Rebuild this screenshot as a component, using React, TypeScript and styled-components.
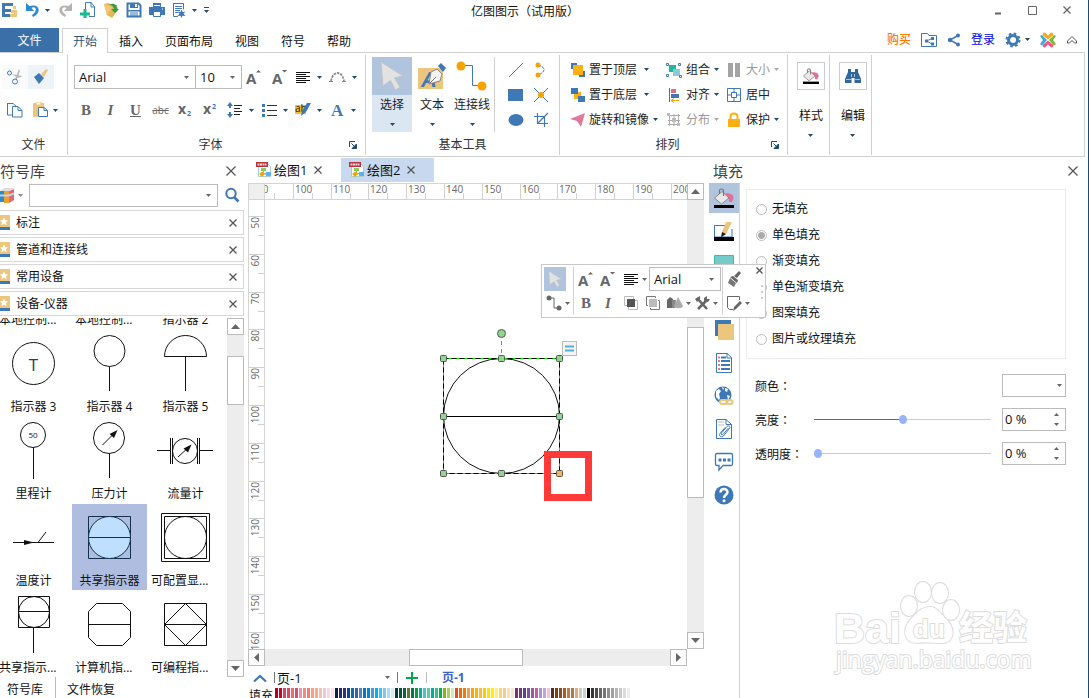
import React from "react";
import styled, { createGlobalStyle, css } from "styled-components";

const blue = "#3f79b5";
const navy = "#1f4a6d";
const gray = "#666";
const sand = "#edc67e";
const amber = "#f5a300";
const line = "#d0d0d0";

const Global = createGlobalStyle`
  *, *::before, *::after { box-sizing: border-box; }
  body { margin: 0; background: #fff; }
  body, button, input, select {
    font-family: "Open Sans", "Noto Sans CJK SC", sans-serif;
    font-size: 12px;
    line-height: 16px;
    color: #111;
  }
  button { border: 0; padding: 0; background: none; }
  svg { display: block; flex: none; }
`;

/* ---------- shell ---------- */
const Shell = styled.div`
  display: flex;
  flex-direction: column;
  height: 100vh;
  overflow: hidden;
  border-right: 1px solid ${navy};
`;
const TitleBar = styled.header`
  display: grid;
  grid-template-columns: 1fr auto 1fr;
  align-items: center;
  height: 24px;
  padding: 0 17px 4px 1px;
`;
const QuickBar = styled.div`
  display: flex;
  align-items: center;
  gap: 7px;
`;
const QuickGroup = styled.div`
  display: flex;
  align-items: center;
  gap: 4px;
`;
const AppTitle = styled.h1`
  margin: 4px 22px 0 0;
  font-size: 12px;
  line-height: 16px;
  font-weight: 400;
`;
const WindowButtons = styled.div`
  display: flex;
  justify-content: flex-end;
  gap: 25px;
`;
const IconButton = styled.button`
  display: flex;
  align-items: center;
  justify-content: center;
`;

/* ---------- tabs ---------- */
const TabBar = styled.nav`
  display: flex;
  align-items: flex-end;
  height: 28px;
  margin-right: 10px;
`;
const FileTab = styled.button`
  width: 59px;
  height: 24px;
  margin-right: 3px;
  padding-top: 2px;
  color: #fff;
  background: #3a70a8;
`;
const Tab = styled.button<{ $active?: boolean }>`
  position: relative;
  z-index: 1;
  height: 25px;
  padding: 2px 11px 0;
  margin-bottom: -1px;
  ${(p) =>
    p.$active &&
    css`
      padding: 1px 10px 0;
      color: #2b567e;
      background: #fff;
      border: solid ${line};
      border-width: 1px 1px 0;
    `}
`;
const Account = styled.div`
  display: flex;
  align-items: center;
  gap: 10px;
  height: 25px;
  margin-left: auto;
`;
const AccountLink = styled.a<{ $buy?: boolean }>`
  color: ${(p) => (p.$buy ? "#ff7800" : "#0000f0")};
  font-weight: ${(p) => (p.$buy ? 500 : 400)};
  text-decoration: none;
`;

/* ---------- ribbon ---------- */
const Ribbon = styled.section`
  display: flex;
  flex: none;
  height: 105px;
  margin-right: 3px;
  padding: 2px 0 1px;
  border: solid ${line};
  border-width: 1px 1px 1px 0;
`;
const Group = styled.div<{ $w: number }>`
  display: flex;
  flex-direction: column;
  width: ${(p) => p.$w}px;
  border-right: 1px solid ${line};
`;
const GroupRows = styled.div`
  display: flex;
  flex-direction: column;
  gap: 9px;
  padding: 10px 2px 0 6px;
`;
const GroupRow = styled.div`
  display: flex;
  align-items: center;
  height: 24px;
`;
const GroupLabel = styled.div`
  display: flex;
  align-items: center;
  justify-content: center;
  margin-top: auto;
  padding: 0 0 2px;
  color: #333;
  & > span { flex: 1; text-align: center; }
`;
const Launcher = styled(IconButton)`
  width: 8px;
  height: 16px;
  margin: 0 8px 0 -4px;
`;
const FileRows = styled(GroupRows)`
  padding: 10px 8px 0 2px;
`;
const FileButton = styled(IconButton)<{ $tint?: string; $menu?: boolean }>`
  gap: 4px;
  min-width: 26px;
  height: 24px;
  padding-left: ${(p) => (p.$menu ? 5 : 0)}px;
  background: ${(p) => p.$tint || "none"};
`;
const GlyphButton = styled(IconButton)<{ $w: number }>`
  width: ${(p) => p.$w}px;
  height: 24px;
`;
const MenuSet = styled.div`
  display: flex;
  margin-left: auto;
`;
const MenuButton = styled(IconButton)`
  justify-content: flex-start;
  gap: 6px;
  width: 34px;
  height: 24px;
`;
const Combo = styled.label<{ $w?: string; $h?: number }>`
  display: flex;
  align-items: center;
  flex: ${(p) => (p.$w ? "none" : "1")};
  width: ${(p) => p.$w || "auto"};
  height: ${(p) => p.$h || 24}px;
  padding-right: 6px;
  background: #fff;
  border: 1px solid #bbb;
  & + & { margin-left: -1px; }
  select, input {
    flex: 1;
    width: 100%;
    min-width: 0;
    height: 100%;
    padding: 0 0 0 4px;
    font-size: 13px;
    appearance: none;
    border: 0;
    outline: 0;
    background: none;
  }
`;

const ToolRow = styled.div`
  display: flex;
  padding: 2px 0 0 6px;
`;
const BigTool = styled.button<{ $active?: boolean }>`
  display: flex;
  flex-direction: column;
  align-items: center;
  width: 40px;
  height: 75px;
  color: #222;
  white-space: nowrap;
  background: ${(p) => (p.$active ? "#dae6f1" : "none")};
`;
const BigIcon = styled.span<{ $active?: boolean }>`
  display: flex;
  align-items: center;
  justify-content: center;
  width: 40px;
  height: 38px;
  margin-bottom: 2px;
  background: ${(p) => (p.$active ? "#b0c4de" : "none")};
`;
const BigArrow = styled.span`
  margin-top: 10px;
`;
const ShapeGrid = styled.div`
  display: grid;
  grid-template-columns: 25px 25px;
  grid-auto-rows: 25px;
  margin-left: 2px;
  padding-left: 8px;
  border-left: 1px solid ${line};
`;
const ArrangeGrid = styled.div`
  display: grid;
  grid-template-columns: 96px 60px 60px;
  grid-auto-rows: 25px;
  padding: 2px 0 0 10px;
`;
const ArrangeButton = styled.button<{ $dim?: boolean; $min?: number }>`
  display: flex;
  align-items: center;
  gap: 4px;
  white-space: nowrap;
  color: ${(p) => (p.$dim ? "#999" : "#222")};
  & > span { min-width: ${(p) => p.$min || 24}px; text-align: left; }
`;
const StyleTool = styled.button`
  display: flex;
  flex-direction: column;
  align-items: center;
  gap: 18px;
  padding: 7px 0 0 5px;
  width: 100%;
`;
const Framed = styled.span`
  display: flex;
  align-items: center;
  justify-content: center;
  width: 28px;
  height: 28px;
  border: 1px solid #ccc;
`;
const StyleText = styled.span`
  display: flex;
  flex-direction: column;
  align-items: center;
  gap: 10px;
`;

/* ---------- library panel ---------- */
const Body = styled.main`
  display: flex;
  flex: 1;
  min-height: 0;
`;
const Library = styled.aside`
  display: flex;
  flex-direction: column;
  flex: none;
  width: 248px;
  padding-right: 4px;
`;
const PanelHead = styled.div`
  display: flex;
  align-items: center;
  justify-content: space-between;
  flex: none;
  height: 26px;
  padding: 2px 8px 0 0;
`;
const PanelTitle = styled.h2`
  margin: 0;
  font-size: 15px;
  line-height: 20px;
  font-weight: 400;
  color: #444;
`;
const SearchRow = styled.div`
  display: flex;
  align-items: center;
  flex: none;
  gap: 6px;
  height: 24px;
  padding-right: 4px;
  margin-bottom: 3px;
`;
const Category = styled.div`
  display: flex;
  align-items: center;
  flex: none;
  height: 25px;
  margin-bottom: 2px;
  padding-right: 6px;
  border: solid #d8d8d8;
  border-width: 1px 1px 1px 0;
  & > span { flex: 1; margin-left: 6px; }
`;
const Shelf = styled.div`
  display: flex;
  flex: 1;
  min-height: 0;
`;
const SymbolView = styled.div`
  display: flex;
  flex: 1;
  flex-direction: column;
  justify-content: flex-end;
  overflow: hidden;
`;
const SymbolGrid = styled.div`
  display: grid;
  grid-template-columns: repeat(3, 75px);
  grid-auto-rows: 86px;
  gap: 1px;
  margin-left: -4px;
`;
const SymbolCell = styled.button<{ $selected?: boolean; $cut?: boolean }>`
  display: flex;
  flex-direction: column;
  justify-content: flex-end;
  align-items: ${(p) => (p.$cut ? "flex-start" : "center")};
  white-space: nowrap;
  background: ${(p) => (p.$selected ? "#aebde0" : "none")};
  & > span { height: 20px; padding: 3px 0 0 ${(p) => (p.$cut ? 3 : 0)}px; }
`;
const BottomTabs = styled.div`
  display: flex;
  flex: none;
  height: 21px;
`;
const BottomTab = styled.button<{ $first?: boolean }>`
  padding: 4px 12px 0 ${(p) => (p.$first ? 7 : 11)}px;
  border-right: ${(p) => (p.$first ? "1px solid #bbb" : "0")};
`;

/* ---------- scroll bars ---------- */
const ScrollBar = styled.div<{ $row?: boolean }>`
  display: flex;
  flex: none;
  flex-direction: ${(p) => (p.$row ? "row" : "column")};
  ${(p) => (p.$row ? "height: 17px; margin-right: 17px;" : "width: 17px;")}
  background: #ededed;
`;
const ScrollEnd = styled(IconButton)`
  flex: none;
  width: 17px;
  height: 17px;
  background: #fff;
  border: 1px solid #bbb;
`;
const Track = styled.div<{ $grow: number }>`
  flex: ${(p) => p.$grow} 1 0;
`;
const Thumb = styled.div<{ $grow: number }>`
  flex: ${(p) => p.$grow} 1 0;
  background: #fff;
  border: 1px solid #bbb;
`;

/* ---------- drawing area ---------- */
const Centre = styled.section`
  display: flex;
  flex: 1;
  flex-direction: column;
  min-width: 0;
`;
const DocTabs = styled.div`
  display: flex;
  flex: none;
  height: 26px;
  padding-top: 1px;
`;
const DocTab = styled.div<{ $active?: boolean }>`
  display: flex;
  align-items: center;
  gap: 2px;
  width: 93px;
  height: 24px;
  padding-left: 8px;
  font-size: 13px;
  background: ${(p) => (p.$active ? "#c8d8ef" : "none")};
  & > button { margin-left: 5px; }
`;
const Sheet = styled.div`
  display: grid;
  flex: 1;
  grid-template-columns: 17px minmax(0, 1fr) 17px;
  grid-template-rows: 17px minmax(0, 1fr);
  min-height: 0;
`;
const RulerCorner = styled.div`
  background: #efefef;
  border: 1px solid #d4d4d4;
`;
const RulerTop = styled.div`
  overflow: hidden;
  border: solid #d4d4d4;
  border-width: 1px 0;
`;
const RulerSide = styled.div`
  overflow: hidden;
  border: solid #d4d4d4;
  border-width: 0 1px;
`;
const SideScroll = styled.div`
  display: flex;
  grid-column: 3;
  grid-row: 1 / 3;
`;
const Canvas = styled.div`
  position: relative;
  z-index: 2;
  min-width: 0;
`;
const Placed = styled.div<{ $x: number; $y: number }>`
  position: absolute;
  left: ${(p) => p.$x}px;
  top: ${(p) => p.$y}px;
`;
const Marker = styled(Placed)`
  width: 48px;
  height: 50px;
  border: 7px solid #ff3838;
`;
const FloatBar = styled(Placed)`
  display: flex;
  gap: 1px;
  width: 225px;
  height: 54px;
  padding: 2px;
  background: #fff;
  border: 1px solid #c8c8c8;
`;
const FloatCol = styled.div<{ $w: number }>`
  display: flex;
  flex-direction: column;
  flex: none;
  width: ${(p) => p.$w}px;
  & + & { border-left: 1px solid ${line}; padding-left: 2px; }
`;
const FloatRow = styled.div`
  display: flex;
  align-items: center;
  height: 24px;
`;
const FloatButton = styled(IconButton)<{ $w: number; $active?: boolean }>`
  width: ${(p) => p.$w}px;
  height: 24px;
  gap: 3px;
  background: ${(p) => (p.$active ? "#b0c4de" : "none")};
`;
const FloatEnd = styled.div`
  display: flex;
  flex-direction: column;
  align-items: flex-end;
  gap: 11px;
  margin-left: auto;
`;
const PageBar = styled.div`
  display: flex;
  align-items: center;
  flex: none;
  height: 22px;
  padding: 1px 0 0 5px;
`;
const PageSelect = styled.label`
  display: flex;
  align-items: center;
  width: 124px;
  height: 11px;
  margin-left: 7px;
  padding-right: 7px;
  border: solid #777;
  border-width: 0 1px;
  select {
    flex: 1;
    padding: 0 0 0 2px;
    font-size: 13px;
    appearance: none;
    border: 0;
    background: none;
  }
`;
const AddPage = styled(IconButton)`
  width: 29px;
  height: 11px;
  border-right: 1px solid #bbb;
`;
const PageTab = styled.button`
  margin-left: 15px;
  color: #3a62c8;
  font-weight: 700;
`;
const Palette = styled.div`
  display: flex;
  flex: none;
  gap: 1px;
  height: 10px;
  padding-left: 1px;
  overflow: hidden;
  & > span { width: 25px; }
`;
const Swatch = styled.button<{ $c: string }>`
  width: 3px;
  background: ${(p) => p.$c};
`;

/* ---------- fill panel ---------- */
const FillPanel = styled.aside`
  display: flex;
  flex-direction: column;
  flex: none;
  width: 384px;
  padding-left: 5px;
`;
const FillHead = styled(PanelHead)`
  padding: 2px 10px 0 4px;
`;
const FillBody = styled.div`
  display: flex;
  flex: 1;
  min-height: 0;
`;
const IconStrip = styled.div`
  display: flex;
  flex-direction: column;
  flex: none;
  gap: 3px;
  width: 31px;
  border-right: 1px solid ${line};
`;
const StripButton = styled(IconButton)<{ $active?: boolean }>`
  height: 30px;
  background: ${(p) => (p.$active ? "#b0c4de" : "none")};
`;
const FillForm = styled.form`
  position: relative;
  flex: 1;
  padding: 6px 22px 0 6px;
`;
const Choices = styled.fieldset`
  display: flex;
  flex-direction: column;
  height: 170px;
  margin: 0 0 9px;
  padding: 6px 9px;
  border: 1px solid #ececec;
`;
const Choice = styled.label`
  display: flex;
  align-items: center;
  gap: 5px;
  height: 26px;
  input {
    appearance: none;
    width: 11px;
    height: 11px;
    margin: 0;
    border: 1px solid #bbb;
    border-radius: 50%;
  }
  input:checked { background: radial-gradient(#aaa 0 3px, #fff 4px); }
`;
const Field = styled.div`
  display: grid;
  grid-template-columns: 59px 1fr 64px;
  align-items: center;
  height: 34px;
  padding-left: 9px;
`;
const FieldLabel = styled.label`
  padding-top: 2px;
`;
const Colon = styled.span`
  font-family: "Noto Sans CJK TC", sans-serif;
`;
const Slider = styled.input<{ $v: number }>`
  appearance: none;
  width: auto;
  min-width: 0;
  height: 12px;
  margin: 0 11px 0 0;
  background: linear-gradient(90deg, #666 ${(p) => p.$v}%, #ccc ${(p) => p.$v}%) center / 100% 1px no-repeat;
  &::-webkit-slider-thumb {
    appearance: none;
    width: 8px;
    height: 9px;
    border-radius: 50%;
    background: #97b3ff;
  }
`;
const FieldBox = styled(Combo)`
  grid-column: 3;
  height: 23px;
  padding-right: 6px;
  input { padding-left: 2px; }
`;
const SelectBox = styled(FieldBox)`
  padding-right: 3px;
`;
const Spin = styled.span`
  display: flex;
  flex-direction: column;
  gap: 7px;
`;
const Watermark = styled.div`
  position: absolute;
  right: 53px;
  bottom: 20px;
`;

/* ---------- icons ---------- */
type IcProps = { w?: number; h?: number; children: React.ReactNode };
const Ic = ({ w = 16, h = 16, children }: IcProps) => (
  <svg width={w} height={h} viewBox={`0 0 ${w} ${h}`} fill="none" aria-hidden="true">
    {children}
  </svg>
);
const Down = ({ c = navy }: { c?: string }) => (
  <Ic w={5} h={3}><path d="M0 0h5L2.5 3z" fill={c} /></Ic>
);
const Up = ({ c = gray }: { c?: string }) => (
  <Ic w={5} h={3}><path d="M0 3h5L2.5 0z" fill={c} /></Ic>
);
const Cross = ({ s = 8, c = "#555" }: { s?: number; c?: string }) => (
  <Ic w={s} h={s}><path d={`M.5 .5L${s - 0.5} ${s - 0.5}M${s - 0.5} .5L.5 ${s - 0.5}`} stroke={c} strokeWidth="1.3" /></Ic>
);
const GrowA = ({ down = false }: { down?: boolean }) => (
  <Ic w={18} h={16}>
    <text x="0" y="15" fontSize="15" fontWeight="700" fill={gray}>A</text>
    <path d={down ? "M10 1h5L12.500 3.500z" : "M10 3.500h5L12.500 1z"} fill={gray} />
  </Ic>
);
const AlignLines = () => (
  <Ic w={16} h={14}><path d="M1 2.500h14M1 4.500h10M1 6.500h14M1 8.500h10M1 10.500h14M1 12.500h10" stroke="#111" /></Ic>
);
const FillBucket = ({ s = 20 }: { s?: number }) => (
  <svg width={s} height={s} viewBox="0 0 20 20" fill="none" aria-hidden="true">
    <path d="M11 5.500c4-.8 8 .7 8.500 3.500.2 2-1 4-2 5-.8.500-3-.3-2.800-1.200.5-1.500.5-3-1.200-3.500z" fill="#e0709a" />
    <path d="M8 3.500l7 6.500-7.500 6L.500 10z" fill="#e8e8e8" stroke="#888" />
    <path d="M5.500 6V2.500C5.500.500 9.500.500 9.500 2.500V8" stroke="#777" strokeWidth="1.200" />
    <path d="M0 17h20v3H0z" fill="#000" />
  </svg>
);
const Letter = styled.span<{ $italic?: boolean; $under?: boolean }>`
  font: ${(p) => (p.$italic ? "italic" : "normal")} 700 15px/16px "Liberation Serif", serif;
  color: ${gray};
  text-decoration: ${(p) => (p.$under ? "underline" : "none")};
`;
const Struck = styled.span`
  font-size: 10px;
  color: #666;
  text-decoration: line-through;
`;
const Scripted = ({ sup = false }: { sup?: boolean }) => (
  <Ic w={15} h={14}>
    <text x="0" y="11" fontSize="14" fontWeight="700" fill={gray}>x</text>
    <text x="9" y={sup ? 6 : 13} fontSize="7" fontWeight="700" fill={blue}>2</text>
  </Ic>
);
const DocIcon = () => (
  <Ic>
    <path d="M2.500 1.500h9l3 3v10h-12z" fill="#fff" stroke="#a8ccd0" />
    <path d="M0 0h12v5H0z" fill="#b8323c" />
    <path d="M1.500 2.500h9" stroke="#f4d8d8" strokeWidth="2" strokeDasharray="2 .5" />
    <path d="M5 6h5v3H8v2h3v1.500H4V11h3V9H5z" fill="#8cc860" />
    <path d="M10 10h5v4h-5z" fill="#5ab0f0" /><path d="M6 9.500L8.800 12 6 15 3.200 12z" fill={amber} />
  </Ic>
);
const LauncherIcon = () => (
  <Ic w={8} h={8}><path d="M.500 6V.500H6" stroke={navy} /><path d="M2.500 2.500L6 6M7.500 3v4.500H3z" stroke={navy} fill={navy} /></Ic>
);
const StarIcon = () => (
  <Ic w={10} h={16}><path d="M0 0h10v12H0z" fill={sand} /><path d="M0 12h10v3H0z" fill={blue} /><path d="M4 2.500l1.200 2.600 2.800.3-2 2 .6 2.800L4 8.800l-2.600 1.400.6-2.800-2-2 2.800-.3z" fill="#fff" /></Ic>
);
const ShareNodes = () => (
  <Ic w={14} h={14}><path d="M11 2.500L3 7l8 4.500" stroke={blue} strokeWidth="1.500" /><g fill={blue}><circle cx="3" cy="7" r="2.200" /><circle cx="11" cy="2.500" r="2" /><circle cx="11" cy="11.500" r="2" /></g></Ic>
);
const Dots = () => (
  <Ic w={2} h={14}><path d="M0 0h2v2H0zM0 6h2v2H0zM0 12h2v2H0z" fill="#ccc" /></Ic>
);
const Pointer = ({ s = 28 }: { s?: number }) => (
  <svg width={s} height={s} viewBox="0 0 28 28" aria-hidden="true"><path d="M3 0l22 14-8.500 2L22 25l-4.500 3-5-9.500L5 24z" fill="#e2e2e2" stroke="#c4c4c4" /></svg>
);

/* ---------- library symbols ---------- */
const sym = { stroke: "#111", fill: "none" };
const symbols: { name: string; cut?: boolean; selected?: boolean; art?: React.ReactNode }[] = [
  { name: "本地控制...", cut: true },
  { name: "本地控制...", cut: true },
  { name: "指示器 2" },
  { name: "指示器 3", art: <><circle cx="37.500" cy="33.500" r="21" {...sym} /><text x="37.500" y="41" textAnchor="middle" fontSize="17" fill="#2b3f55">T</text></> },
  { name: "指示器 4", art: <><circle cx="37.500" cy="21" r="15.500" {...sym} /><path d="M37.500 36.500V61" {...sym} /></> },
  { name: "指示器 5", art: <path d="M16.500 26.500a21 21 0 0 1 42 0zM37.500 26.500V61" {...sym} /> },
  { name: "里程计", art: <><circle cx="37" cy="18" r="12.500" {...sym} /><path d="M37.500 30.500V62" {...sym} /><text x="37" y="21" textAnchor="middle" fontSize="8" fill="#111">50</text></> },
  { name: "压力计", art: <><circle cx="37" cy="21" r="15.500" {...sym} /><path d="M37.500 36.500V61M30.500 28L43 15.500" {...sym} /><path d="M45.500 13l-3.500 8-4.500-4z" fill="#111" /></> },
  { name: "流量计", art: <><circle cx="37" cy="34" r="12.500" {...sym} /><path d="M22.500 21v26M24.500 21v26M49.500 21v26M51.500 21v26M9 33.500h13M52 33.500h13M30 40l11-10" {...sym} /><path d="M43.500 27.500l-3.500 8-4.500-4z" fill="#111" /></> },
  { name: "温度计", art: <><path d="M17 38.500h41M42 38.500L50 28" {...sym} /><path d="M28 36l10 2.500-10 2.500z" fill="#111" /></> },
  { name: "共享指示器", selected: true, art: <><path d="M16.500 12.500h42v42h-42z" stroke="#14304e" fill="none" /><circle cx="37.500" cy="33.500" r="21" stroke="#14304e" fill="#bfdfff" /><path d="M16.500 33.500h42" stroke="#14304e" /></> },
  { name: "可配置显...", cut: true, art: <><path d="M13.500 9.500h48v48h-48zM16.500 12.500h42v42h-42z" {...sym} /><circle cx="37.500" cy="33.500" r="21" {...sym} /></> },
  { name: "共享指示...", cut: true, art: <><path d="M22.500 5.500h31v31h-31zM22.500 20.500h31M37.500 36.500V62" {...sym} /><circle cx="38" cy="21" r="15.500" {...sym} /></> },
  { name: "计算机指...", cut: true, art: <path d="M24.500 12.500h26l8 8v26l-8 8h-26l-8-8v-26zM16.500 33.500h42" {...sym} /> },
  { name: "可编程指...", cut: true, art: <path d="M16.500 12.500h42v42h-42zM37.500 12.500l21 21-21 21-21-21zM16.500 33.500h42" {...sym} /> },
];

const palette =
  "b5001f d7001f cc4a6e e2455f ec6a72 d84b78 e896b0 f08c86 ec8074 ff9e7a f8a88c f4bfb4 ecc8de ffd4e0 ffe0e6 " +
  "0c1f4c 1f2e72 3c2c78 004a96 0c6cae 3c62a8 5480c0 0078c8 0088d8 4c9ad0 00b0f0 34c4f8 84c4e8 a4dcf0 d4ecf4 " +
  "003c30 005a38 106048 5c7c2c 007a48 0c9c40 00b09a 54c0c0 5ccab4 00b090 44b88c 00b848 84b80c a8d058 d0e8c8 " +
  "e04c1c f06a00 f07c00 f09c54 f4a800 fcb400 fcbc3c ffcc00 ffe400 fff000 fff070 f4d47c f4cc8c fce0ac fce8d0 " +
  "783080 6c3c7c 643c90 7c54a0 985ca0 c060a0 ac90d0 c4a4d4 f0c4dc 5c2c1c 843c14 8c4c24 a85c24 c07c40 a87850 " +
  "dcb07c d4c8b8 c8d4cc 000000 383838 505050 686868 787878 909090 a0a0a0 b4b4b4 c8c8c8 dcdcdc ececec";

/* ---------- rulers ---------- */
const majors = (from: number, start: number, count: number) =>
  Array.from({ length: count }, (_, i) => ({
    value: from + i * 10,
    at: start + Math.round((i * 189) / 5),
  }));

const TopRuler = () => (
  <svg width="422" height="15" viewBox="0 0 422 15">
    {majors(90, -10, 12).map((m) => (
      <g key={m.value}>
        <path d={`M${m.at + 0.5} 0v15M${m.at + 19.5} 9v6`} stroke="#d0d0d0" />
        <text x={m.at + 2} y="9" fontSize="10" fill="#6a6a6a">{m.value}</text>
      </g>
    ))}
  </svg>
);
const LeftRuler = () => (
  <svg width="15" height="449" viewBox="0 0 15 449">
    {majors(50, 16, 12).map((m) => (
      <g key={m.value}>
        <path d={`M0 ${m.at + 0.5}h15M9 ${m.at + 19.5}h6`} stroke="#d0d0d0" />
        <text
          transform={`translate(10 ${m.at + 1}) rotate(-90)`}
          textAnchor="end"
          fontSize="10"
          fill="#6a6a6a"
        >
          {m.value}
        </text>
      </g>
    ))}
  </svg>
);

/* ---------- selected shape on the sheet ---------- */
const Handle = ({ x, y, c = "#8fd68f" }: { x: number; y: number; c?: string }) => (
  <rect x={x - 3} y={y - 3} width="6" height="6" rx="1" fill={c} stroke="#555" />
);
const SelectedShape = () => (
  <svg width="144" height="152" viewBox="438 326 144 152" fill="none">
    <ellipse cx="501.500" cy="416" rx="58" ry="57.500" stroke="#111" />
    <path d="M443.500 416.500h116" stroke="#000" />
    <rect x="443.500" y="358.500" width="116" height="115" stroke="#00e800" />
    <rect x="443.500" y="358.500" width="116" height="115" stroke="#000" strokeDasharray="5 3" />
    <path d="M501.500 341v17" stroke="#00e800" strokeDasharray="4 4" />
    <circle cx="501.500" cy="333.500" r="4" fill="#8fd68f" stroke="#555" />
    {[443.5, 501.5, 559.5].map((x) => (
      <React.Fragment key={x}>
        <Handle x={x} y={358.500} />
        <Handle x={x} y={473.500} c={x > 550 ? "#ffb347" : undefined} />
      </React.Fragment>
    ))}
    <Handle x={443.500} y={416.500} />
    <Handle x={559.500} y={416.500} />
    <rect x="562.500" y="341.500" width="14" height="14" fill="#f4f4f4" stroke="#bbb" />
    <path d="M565 346.500h9M565 350.500h9" stroke="#4db4d8" strokeWidth="2" />
  </svg>
);

const stripIcons: React.ReactNode[] = [
  <FillBucket />,
  <Ic w={20} h={20}><path d="M.500 4.500H14M.500 4v12H18V8" stroke={blue} /><path d="M12 1h6l-6 12-5 3 1-5z" fill={sand} /><path d="M8 11l4 2-5 3.500z" fill="#222" /><path d="M0 16h20v4H0z" fill="#000" /></Ic>,
  <Ic w={20} h={20}><path d="M.500 1.500h19v17H.500z" fill="#74ccc8" stroke="#4cb4ac" /></Ic>,
  <Ic w={20} h={20}><path d="M2 2h16v16H2z" fill="#9bb8d8" /></Ic>,
  <Ic w={20} h={20}><path d="M1 0h16v16H1z" fill={blue} /><path d="M4 4h16v16H4z" fill={sand} /></Ic>,
  <Ic w={20} h={20}><path d="M2.500.500H13l4.500 4V19.500h-15z" stroke={blue} /><path d="M13 0v5h5" stroke={blue} /><path d="M7 4.500h5M7 8h9M7 12h9M7 16h9" stroke={blue} strokeWidth="2" /><path d="M4 4.500h2M4 8h2M4 12h2M4 16h2" stroke="#e87888" strokeWidth="2" /></Ic>,
  <Ic w={20} h={20}><circle cx="9" cy="9" r="8.500" fill={blue} /><path d="M2 5l3-2 2 2-2 3 1 4-1 2-3-3zM8 1l2 1-1 2zM11 2l3 1-1 3-2-1zM13 9l3 1-2 4z" fill="#fff" /><rect x="6" y="14" width="7" height="4" rx="2" fill="#fff" stroke={sand} strokeWidth="2" /><rect x="12.500" y="14" width="6" height="4" rx="2" stroke={sand} strokeWidth="2" /></Ic>,
  <Ic w={20} h={20}><path d="M2.500.500H12l5.500 5V19.500h-15zM12 .500v5h5.500" stroke={blue} /><path d="M4 3h6M4 6h6" stroke="#bbb" /><path d="M14.500 9L9 15.500c-1 1-2.500 0-1.500-1.500L13 7.500c1.500-1.500 4 0 2.500 2L9.500 17c-2 2-5 0-3.500-2.500l5-6" stroke={blue} /></Ic>,
  <Ic w={20} h={20}><path d="M3 1.500h14c1 0 1.500.5 1.500 1.500v9c0 1-.5 1.500-1.500 1.500H9L5 18v-4.500H3c-1 0-1.500-.5-1.500-1.500V3c0-1 .5-1.500 1.500-1.500z" stroke={blue} strokeWidth="1.300" /><path d="M4.500 6.500h3v3h-3zM9 6.500h3v3H9zM13.500 6.500h3v3h-3z" fill={blue} /></Ic>,
  <Ic w={20} h={20}><circle cx="10" cy="10" r="9.500" fill={blue} /><path d="M6.500 7.500c0-4.500 7-4.500 7-.5 0 3-3.500 2.500-3.500 6" stroke="#fff" strokeWidth="2.400" /><circle cx="10" cy="15.800" r="1.500" fill="#fff" /></Ic>,
];
const stripNames = ["填充", "线条", "主题", "阴影", "图层", "形状数据", "超链接", "附件", "注释", "帮助"];
const choices = ["无填充", "单色填充", "渐变填充", "单色渐变填充", "图案填充", "图片或纹理填充"];

export default function App() {
  return (
    <Shell>
      <Global />
      <TitleBar>
        <QuickBar>
          <QuickGroup>
            <Ic w={17}><path d="M1 1h11v3H4v3h6v3H4v2h5v3H1z" fill={blue} /><path d="M12 4h3v3h-3zM10 8h6v7H9v-3h4v-1h-3z" fill={sand} /></Ic>
          </QuickGroup>
          <QuickGroup>
            <IconButton aria-label="撤销"><Ic><path d="M1 1v8h8L6.500 6C11 3.500 13 9 7 13l1 2C17 11 15 1 4.500 4z" fill="#2a8ad4" /></Ic></IconButton>
            <Down />
          </QuickGroup>
          <IconButton aria-label="恢复"><Ic><path d="M15 1v8H7l2.500-3C5 3.500 3 9 9 13l-1 2C-1 11 1 1 11.500 4z" fill="#b4b4b4" /></Ic></IconButton>
          <IconButton aria-label="新建"><Ic><path d="M5.500 7V.500H11l3.500 4V14.500H9M11 0v5h4" stroke={blue} /><path d="M3.500 7h3v3.500H10v3H6.500V17h-3v-3.500H0v-3h3.500z" fill="#1cb890" /></Ic></IconButton>
          <IconButton aria-label="打开"><Ic><path d="M1 2l5-1 2 2h6l1 5-6 8-5-3z" fill="#e8b455" /><path d="M1 2l3 11 5-8z" fill="#f0c878" /><path d="M6 3c5-3 8 0 8 4h2l-4 4-4-4h3c0-2-2-4-5-4z" fill="#2ea043" /></Ic></IconButton>
          <IconButton aria-label="保存"><Ic><path d="M1.500 1.500h11l2 2v11h-13z" fill="#fff" stroke={blue} strokeWidth="2" /><path d="M4 1h8v5H4zM1 8h14v1.500H1z" fill={blue} /><path d="M9 2h2v3H9z" fill="#fff" /><path d="M4 11h8M4 13h8" stroke={blue} /></Ic></IconButton>
          <IconButton aria-label="打印"><Ic><path d="M4 1h8v4H4zM0 5h16v8H0z" fill={blue} /><path d="M4.500 9.500h7v5h-7z" fill="#fff" stroke={blue} /><path d="M5 3.500h6M13 7h1" stroke="#fff" /></Ic></IconButton>
          <QuickGroup>
            <IconButton aria-label="预览"><Ic><path d="M1.500 1.500h10v6M1.500 1v13.500H6" stroke={blue} /><path d="M3 4.500h7M3 6.500h7M3 8.500h5M3 10.500h3" stroke={blue} /><path d="M9.500 7.500l1 2.500 3-.5-2 2.300 2 2.200-3-.3-1 2.300-1-2.300-3 .3 2-2.200-2-2.300 3 .5z" fill={blue} /></Ic></IconButton>
            <Down />
          </QuickGroup>
          <Ic w={6} h={6}><path d="M0 .500h5" stroke={navy} /><path d="M0 3h5L2.500 6z" fill={navy} /></Ic>
        </QuickBar>
        <AppTitle>亿图图示（试用版）</AppTitle>
        <WindowButtons>
          <IconButton aria-label="最小化"><Ic w={10} h={9}><path d="M2 7.500h6" stroke={gray} strokeWidth="2" /></Ic></IconButton>
          <IconButton aria-label="最大化"><Ic w={10} h={9}><path d="M.500.500h8v8h-8z" stroke={gray} /></Ic></IconButton>
          <IconButton aria-label="关闭"><Cross s={8} c={gray} /></IconButton>
        </WindowButtons>
      </TitleBar>

      <TabBar>
        <FileTab>文件</FileTab>
        <Tab $active>开始</Tab>
        {["插入", "页面布局", "视图", "符号", "帮助"].map((t) => <Tab key={t}>{t}</Tab>)}
        <Account>
          <AccountLink $buy href="#buy">购买</AccountLink>
          <IconButton aria-label="共享文件夹"><Ic><path d="M.500 1.500h6l1.500 2h7.500v11H.500z" stroke={blue} /><path d="M11 6.500L5.500 9l5.500 3" stroke={blue} /><path d="M4 7.500h3v3H4zM10 5h3v3h-3zM10 10.500h3v3h-3z" fill={blue} /></Ic></IconButton>
          <IconButton aria-label="分享"><ShareNodes /></IconButton>
          <AccountLink href="#login">登录</AccountLink>
          <QuickGroup>
            <IconButton aria-label="设置"><Ic><circle cx="8" cy="8" r="6.500" stroke={blue} strokeWidth="2" strokeDasharray="2.600 2.500" /><circle cx="8" cy="8" r="4.500" stroke={blue} strokeWidth="3" /></Ic></IconButton>
            <Down />
          </QuickGroup>
          <IconButton aria-label="主页"><Ic><path d="M3 1l2-.5 3 3 3-3 2 .5.500 2L8 7.500 2.500 3z" fill="#f5a820" /><path d="M14 3l2 1-3 4 3 4-2 1.500L9 8z" fill="#7cb82c" /><path d="M3 15l2 .5 3-3 3 3 2-.5.500-2L8 8.500 2.500 13z" fill="#ec5c80" /><path d="M2 3L0 4l3 4-3 4 2 1.500L7 8z" fill="#38a8e0" /></Ic></IconButton>
          <IconButton aria-label="折叠功能区"><Ic w={12} h={10}><path d="M1.500 6L6 1.500 10.500 6v2H8.500L6 5.500 3.500 8h-2z" stroke="#555" /></Ic></IconButton>
        </Account>
      </TabBar>

      <Ribbon>
        <Group $w={68}>
          <FileRows>
            <GroupRow>
              <FileButton $tint="#f8fafc" aria-label="剪切"><Ic><circle cx="2.500" cy="4" r="2" stroke={blue} /><circle cx="8" cy="12.500" r="2.500" stroke={blue} /><path d="M4.500 5l11 2-4 2zM8 10L12 0l1 2-3 8z" fill="#b8b8b8" /></Ic></FileButton>
              <FileButton $tint="#eef3f8" aria-label="格式刷"><Ic><path d="M8 5l5-5 2 1-4 7z" fill={sand} /><path d="M6 4l5 5-5 6-5-7z" fill={blue} /></Ic></FileButton>
            </GroupRow>
            <GroupRow>
              <FileButton aria-label="复制"><Ic><path d="M.500 1.500H6L9 4M.500 1v12H5M5.500 4.500H11l4 4v6.500H5.500zM11 4.500v4h4" stroke={blue} /></Ic></FileButton>
              <FileButton $menu aria-label="粘贴"><Ic><path d="M0 1h11v5H5v9H0z" fill={sand} /><path d="M3 0h5v3H3z" fill="#fff" stroke={sand} /><path d="M5.500 5.500H11l3.500 3v6h-9zM11 5.500v3h3.500" fill="#fff" stroke={blue} /></Ic><Down /></FileButton>
            </GroupRow>
          </FileRows>
          <GroupLabel><span>文件</span></GroupLabel>
        </Group>

        <Group $w={298}>
          <GroupRows>
            <GroupRow>
              <Combo $w="122px"><select aria-label="字体"><option>Arial</option></select><Down c={gray} /></Combo>
              <Combo $w="47px"><select aria-label="字号"><option>10</option></select><Down c={gray} /></Combo>
              <GlyphButton $w={26} aria-label="增大字号"><GrowA /></GlyphButton>
              <GlyphButton $w={26} aria-label="减小字号"><GrowA down /></GlyphButton>
              <MenuSet>
                <MenuButton aria-label="对齐"><AlignLines /><Down /></MenuButton>
                <MenuButton aria-label="弧形文本"><Ic w={17} h={14}><path d="M2 11c1-6 4-8 6.500-8s5.500 2 6.500 8" stroke="#888" strokeWidth="1.800" strokeDasharray="2.500 1" /><path d="M0 11.500h4M13 11.500h4" stroke="#888" /></Ic><Down /></MenuButton>
              </MenuSet>
            </GroupRow>
            <GroupRow>
              <GlyphButton $w={24} aria-label="加粗"><Letter>B</Letter></GlyphButton>
              <GlyphButton $w={25} aria-label="斜体"><Letter $italic>I</Letter></GlyphButton>
              <GlyphButton $w={25} aria-label="下划线"><Letter $under>U</Letter></GlyphButton>
              <GlyphButton $w={25} aria-label="删除线"><Struck>abc</Struck></GlyphButton>
              <GlyphButton $w={25} aria-label="下标"><Scripted /></GlyphButton>
              <GlyphButton $w={25} aria-label="上标"><Scripted sup /></GlyphButton>
              <MenuSet>
                <MenuButton aria-label="行距"><Ic><path d="M3 0l3 4H4v2H2V4H0zM3 16l3-4H4v-2H2v2H0z" fill={blue} /><path d="M7 3.500h8M7 6.500h6M7 9.500h8M7 12.500h6" stroke="#222" /></Ic><Down /></MenuButton>
                <MenuButton aria-label="项目符号"><Ic><path d="M1 2h3v3H1zM1 7h3v3H1zM1 12h3v3H1z" fill={blue} /><path d="M6 3.500h10M6 8.500h10M6 13.500h10" stroke="#333" /></Ic><Down /></MenuButton>
                <MenuButton aria-label="突出显示"><Ic><path d="M0 3h11v9H0z" fill="#ffb829" /><text x="0" y="10" fontSize="10" fill="#222">ab</text><path d="M12 1h4l-5 9-5 4 1-5z" fill={blue} /></Ic><Down /></MenuButton>
                <MenuButton aria-label="字体颜色"><Ic><text x="2" y="14" fontSize="17" fontWeight="700" fontFamily="Liberation Serif" fill={blue}>A</text></Ic><Down /></MenuButton>
              </MenuSet>
            </GroupRow>
          </GroupRows>
          <GroupLabel><span>字体</span><Launcher aria-label="字体设置"><LauncherIcon /></Launcher></GroupLabel>
        </Group>

        <Group $w={194}>
          <ToolRow>
            <BigTool $active><BigIcon $active><Pointer /></BigIcon>选择<BigArrow><Down /></BigArrow></BigTool>
            <BigTool>
              <BigIcon><Ic w={30} h={30}><path d="M1 7h25v21H1z" fill={sand} /><text x="4" y="26" fontSize="22" fontWeight="700" fontStyle="italic" fontFamily="Liberation Sans" fill={blue}>A</text><path d="M20 8l5 5-2 7-11 3 2-12z" fill="#f4f4f4" stroke="#888" /><path d="M13 22l6-6" stroke="#777" /><path d="M21 5l3-3 5 5-3 4z" fill={blue} /></Ic></BigIcon>
              文本<BigArrow><Down /></BigArrow>
            </BigTool>
            <BigTool>
              <BigIcon><Ic w={32} h={30}><path d="M5 4.500h11.500v20H27" stroke={blue} /><circle cx="5" cy="5" r="4.500" fill={amber} /><circle cx="26" cy="25" r="4.500" fill={amber} /></Ic></BigIcon>
              连接线<BigArrow><Down /></BigArrow>
            </BigTool>
            <ShapeGrid>
              <IconButton aria-label="直线"><Ic><path d="M1 15L15 1" stroke={blue} /></Ic></IconButton>
              <IconButton aria-label="曲线"><Ic><path d="M5 3c8 2 8 7 0 10" stroke={blue} strokeDasharray="3 1" /><circle cx="5" cy="3" r="2.500" fill={amber} /><circle cx="5" cy="13" r="2.500" fill={amber} /></Ic></IconButton>
              <IconButton aria-label="矩形"><Ic><path d="M0 2h15v12H0z" fill={blue} /></Ic></IconButton>
              <IconButton aria-label="连接点"><Ic><path d="M1 1l14 14M15 1L1 15" stroke={blue} /><circle cx="8" cy="8" r="3" fill={amber} /></Ic></IconButton>
              <IconButton aria-label="椭圆"><Ic><ellipse cx="8" cy="8" rx="7.500" ry="6" fill={blue} /></Ic></IconButton>
              <IconButton aria-label="裁剪"><Ic><path d="M4.500 1v10.500H15M1 4.500h10.500V15M5 11L15 1" stroke={blue} strokeWidth="1.200" /></Ic></IconButton>
            </ShapeGrid>
          </ToolRow>
          <GroupLabel><span>基本工具</span></GroupLabel>
        </Group>

        <Group $w={228}>
          <ArrangeGrid>
            <ArrangeButton $min={51}><Ic w={15}><path d="M1 1h6v6H1zM9 9h6v6H9z" fill={blue} /><path d="M3 3h10v10H3z" fill="#ffb010" /></Ic><span>置于顶层</span><Down /></ArrangeButton>
            <ArrangeButton><Ic><path d="M3 3h7v7H3z" fill="#1cb8a0" /><path d="M7 7h7v7H7z" fill="#88ccd8" /><path d="M.500 1.500h2v2h-2zM12.500 1.500h2v2h-2zM.500 12.500h2v2h-2zM13.500 13.500h2v2h-2z" stroke={blue} /></Ic><span>组合</span><Down /></ArrangeButton>
            <ArrangeButton $dim><Ic><path d="M2 1h5v14H2zM9 1h5v14H9z" fill="#a4a4a4" /></Ic><span>大小</span><Down c="#aaa" /></ArrangeButton>
            <ArrangeButton $min={51}><Ic w={15}><path d="M4 5h7v7H4z" fill="#ffb010" /><path d="M1 1h7v6H1zM8 9h7v6H8z" fill={blue} /></Ic><span>置于底层</span><Down /></ArrangeButton>
            <ArrangeButton><Ic><path d="M3.500 1v14" stroke={blue} /><path d="M5 2h5v4H5z" fill="#e07080" /><path d="M5 7h8v4H5z" fill={blue} /><path d="M6 13.500h7M8 11.500l-3 2 3 2" stroke={amber} /></Ic><span>对齐</span><Down /></ArrangeButton>
            <ArrangeButton><Ic><path d="M1.500 1.500h13v13h-13zM5.500 5.500h5v5h-5zM8 1v4.500M8 10.500V15M1 8h4.500M10.500 8H15" stroke={blue} /></Ic><span>居中</span></ArrangeButton>
            <ArrangeButton $min={51}><Ic w={15}><path d="M0 7L15 1l-4 14-4-6z" fill="#e0789c" /></Ic><span>旋转和镜像</span><Down /></ArrangeButton>
            <ArrangeButton $dim><Ic><path d="M2 3.500h12M2 12.500h12M3.500 2v12M12.500 2v12M2 8.500h12M8 2v12" stroke="#aaa" /><path d="M1 1h3v3H1zM6 6h4v4H6zM11 11h3v3h-3z" fill="#bbb" /></Ic><span>分布</span><Down c="#aaa" /></ArrangeButton>
            <ArrangeButton><Ic><path d="M4.500 7V4.500c0-4 7-4 7 0V7" stroke="#ffb010" strokeWidth="2" /><path d="M2 7h12v8H2z" fill="#ffb010" /></Ic><span>保护</span><Down /></ArrangeButton>
          </ArrangeGrid>
          <GroupLabel><span>排列</span><Launcher aria-label="排列设置"><LauncherIcon /></Launcher></GroupLabel>
        </Group>

        <Group $w={42}>
          <StyleTool><Framed><FillBucket s={16} /></Framed><StyleText>样式<Down /></StyleText></StyleTool>
        </Group>
        <Group $w={42}>
          <StyleTool><Framed><Ic><path d="M3 1h3v3h4V1h3v3l3 7v4H9.500v-5h-3v5H0v-4l3-7z" fill="#336699" /><path d="M6.500 6v3M9.500 6v3M1 11.500h5M10 11.500h5" stroke="#a8c4dc" /></Ic></Framed><StyleText>编辑<Down /></StyleText></StyleTool>
        </Group>
      </Ribbon>

      <Body>
        <Library>
          <PanelHead>
            <PanelTitle>符号库</PanelTitle>
            <IconButton aria-label="关闭符号库"><Cross s={10} /></IconButton>
          </PanelHead>
          <SearchRow>
            <QuickGroup>
              <Ic w={14}><path d="M0 4h4v11H0z" fill="#2e8bc8" /><path d="M4 4h5v12H4z" fill="#f0a030" /><path d="M9 4l5-2v11l-5 3z" fill="#e06878" /><path d="M0 4l4-3h10L9 4z" fill="#ddd" /><path d="M0 8.500h9l5-2" stroke="#bcd8e8" strokeWidth="2" /></Ic>
              <Down c="#888" />
            </QuickGroup>
            <Combo $h={23}><input aria-label="搜索符号" /><Down c={gray} /></Combo>
            <IconButton aria-label="搜索"><Ic><circle cx="7" cy="6.500" r="4.700" stroke={blue} strokeWidth="2" /><path d="M10 10l4.500 4.500" stroke={blue} strokeWidth="2.600" /></Ic></IconButton>
          </SearchRow>
          {["标注", "管道和连接线", "常用设备", "设备-仪器"].map((c) => (
            <Category key={c}><StarIcon /><span>{c}</span><IconButton aria-label={`关闭${c}`}><Cross /></IconButton></Category>
          ))}
          <Shelf>
            <SymbolView>
              <SymbolGrid>
                {symbols.map((s, i) => (
                  <SymbolCell key={i} $cut={s.cut} $selected={s.selected}>
                    {s.art && <svg width="75" height="66" viewBox="0 0 75 66">{s.art}</svg>}
                    <span>{s.name}</span>
                  </SymbolCell>
                ))}
              </SymbolGrid>
            </SymbolView>
            <ScrollBar>
              <ScrollEnd aria-label="向上"><Ic w={9} h={5}><path d="M0 5h9L4.500 0z" fill={gray} /></Ic></ScrollEnd>
              <Track $grow={21} /><Thumb $grow={47} /><Track $grow={257} />
              <ScrollEnd aria-label="向下"><Ic w={9} h={5}><path d="M0 0h9L4.500 5z" fill={gray} /></Ic></ScrollEnd>
            </ScrollBar>
          </Shelf>
          <BottomTabs>
            <BottomTab $first>符号库</BottomTab>
            <BottomTab>文件恢复</BottomTab>
          </BottomTabs>
        </Library>

        <Centre>
          <DocTabs>
            <DocTab><DocIcon />绘图1<IconButton aria-label="关闭绘图1"><Cross /></IconButton></DocTab>
            <DocTab $active><DocIcon />绘图2<IconButton aria-label="关闭绘图2"><Cross /></IconButton></DocTab>
          </DocTabs>
          <Sheet>
            <RulerCorner />
            <RulerTop><TopRuler /></RulerTop>
            <SideScroll>
              <ScrollBar>
                <ScrollEnd aria-label="向上"><Ic w={9} h={5}><path d="M0 5h9L4.500 0z" fill={gray} /></Ic></ScrollEnd>
                <Track $grow={128} /><Thumb $grow={170} /><Track $grow={135} />
                <ScrollEnd aria-label="向下"><Ic w={9} h={5}><path d="M0 0h9L4.500 5z" fill={gray} /></Ic></ScrollEnd>
              </ScrollBar>
            </SideScroll>
            <RulerSide><LeftRuler /></RulerSide>
            <Canvas>
              <Placed $x={173} $y={126}><SelectedShape /></Placed>
              <Marker $x={279} $y={251} />
              <FloatBar $x={276} $y={64}>
                <FloatCol $w={28}>
                  <FloatRow><FloatButton $w={22} $active aria-label="选择"><Pointer s={16} /></FloatButton></FloatRow>
                  <FloatRow><FloatButton $w={28} aria-label="连接线"><Ic><path d="M3 3h5v10h5" stroke={gray} /><circle cx="3" cy="3" r="2.500" fill={gray} /><circle cx="13" cy="13" r="2.500" fill={gray} /></Ic><Down c={gray} /></FloatButton></FloatRow>
                </FloatCol>
                <FloatCol $w={148}>
                  <FloatRow>
                    <FloatButton $w={22} aria-label="增大字号"><GrowA /></FloatButton>
                    <FloatButton $w={22} aria-label="减小字号"><GrowA down /></FloatButton>
                    <FloatButton $w={29} aria-label="对齐"><AlignLines /><Down c={gray} /></FloatButton>
                    <Combo $w="72px"><select aria-label="字体"><option>Arial</option></select><Down c={gray} /></Combo>
                  </FloatRow>
                  <FloatRow>
                    <FloatButton $w={20} aria-label="加粗"><Letter>B</Letter></FloatButton>
                    <FloatButton $w={24} aria-label="斜体"><Letter $italic>I</Letter></FloatButton>
                    <FloatButton $w={22} aria-label="置于顶层"><Ic><path d="M1.500 1.500h9v9h-9zM5.500 5.500h9v9h-9z" stroke="#bbb" /><path d="M4 4h8v8H4z" fill="#555" /></Ic></FloatButton>
                    <FloatButton $w={22} aria-label="置于底层"><Ic><path d="M4 4h8v8H4z" fill="#bbb" /><path d="M10.500 3V1.500h-9v9H3M13 5.500h1.500v9h-9V13" stroke="#777" /></Ic></FloatButton>
                    <FloatButton $w={28} aria-label="样式"><Ic w={17}><path d="M1 5l3-3 3 2v9H1z" fill="#666" /><path d="M6 5h4l-1 8H6z" fill="#888" /><path d="M12 2l5 9c-1 3-8 3-9 0z" fill="#aaa" /></Ic><Down c={gray} /></FloatButton>
                    <FloatButton $w={28} aria-label="工具"><Ic><path d="M3 3l10 11M13 5L4 14" stroke={gray} strokeWidth="2.600" /><path d="M1 4l5-3v3L3 7zM10 3l3-2v3h3l-2 3-4-1z" fill={gray} /></Ic><Down c={gray} /></FloatButton>
                  </FloatRow>
                </FloatCol>
                <FloatCol $w={30}>
                  <FloatRow><FloatButton $w={18} aria-label="格式刷"><Ic w={14}><path d="M12 0l2 2-4 5-3-2zM6 5l5 4-1 3-7-6z" fill={gray} /><path d="M3 7l6 5-2 4-6-4z" fill="#777" /></Ic></FloatButton></FloatRow>
                  <FloatRow><FloatButton $w={26} aria-label="编辑形状"><Ic><path d="M13.500 5V1.500h-12v11l2 2H7" stroke={gray} /><path d="M14 6l2 2-6 6-3 2 1-4z" fill={gray} /></Ic><Down c={gray} /></FloatButton></FloatRow>
                </FloatCol>
                <FloatEnd>
                  <IconButton aria-label="关闭浮动工具栏"><Cross s={7} /></IconButton>
                  <Dots />
                </FloatEnd>
              </FloatBar>
            </Canvas>
          </Sheet>
          <ScrollBar $row>
            <ScrollEnd aria-label="向左"><Ic w={5} h={9}><path d="M5 0v9L0 4.500z" fill={gray} /></Ic></ScrollEnd>
            <Track $grow={145} /><Thumb $grow={112} /><Track $grow={148} />
            <ScrollEnd aria-label="向右"><Ic w={5} h={9}><path d="M0 0v9l5-4.500z" fill={gray} /></Ic></ScrollEnd>
          </ScrollBar>
          <PageBar>
            <IconButton aria-label="展开页面列表"><Ic w={14} h={8}><path d="M1 7.500L7 2l6 5.500" stroke={blue} strokeWidth="2.200" /></Ic></IconButton>
            <PageSelect><select aria-label="页面"><option>页-1</option></select><Down c={gray} /></PageSelect>
            <AddPage aria-label="添加页面"><Ic w={12} h={12}><path d="M6 0v12M0 6h12" stroke="#00a848" strokeWidth="2" /></Ic></AddPage>
            <PageTab>页-1</PageTab>
          </PageBar>
          <Palette>
            <span>填充</span>
            {palette.split(" ").map((c, i) => <Swatch key={i} $c={`#${c}`} aria-label={`#${c}`} />)}
          </Palette>
        </Centre>

        <FillPanel>
          <FillHead>
            <PanelTitle>填充</PanelTitle>
            <IconButton aria-label="关闭填充面板"><Cross s={10} /></IconButton>
          </FillHead>
          <FillBody>
            <IconStrip>
              {stripIcons.map((icon, i) => (
                <StripButton key={i} $active={i === 0} aria-label={stripNames[i]}>{icon}</StripButton>
              ))}
            </IconStrip>
            <FillForm>
              <Choices aria-label="填充">
                {choices.map((c, i) => (
                  <Choice key={c}><input type="radio" name="fill" defaultChecked={i === 1} />{c}</Choice>
                ))}
              </Choices>
              <Field>
                <FieldLabel htmlFor="color">颜色<Colon>：</Colon></FieldLabel>
                <SelectBox as="div"><select id="color"><option aria-label="白色"></option></select><Down c={gray} /></SelectBox>
              </Field>
              <Field>
                <FieldLabel htmlFor="bright">亮度<Colon>：</Colon></FieldLabel>
                <Slider id="bright" type="range" defaultValue={50} $v={50} />
                <FieldBox><input aria-label="亮度值" defaultValue="0 %" /><Spin><Up /><Down c={gray} /></Spin></FieldBox>
              </Field>
              <Field>
                <FieldLabel htmlFor="clear">透明度<Colon>：</Colon></FieldLabel>
                <Slider id="clear" type="range" defaultValue={0} $v={0} />
                <FieldBox><input aria-label="透明度值" defaultValue="0 %" /><Spin><Up /><Down c={gray} /></Spin></FieldBox>
              </Field>
              <Watermark>
                <svg width="206" height="98" viewBox="830 580 206 98" fill="#fff" stroke="#dcdcdc" strokeWidth="2" paintOrder="stroke">
                  <ellipse cx="910" cy="606" rx="8" ry="10" />
                  <ellipse cx="924" cy="592" rx="8" ry="10" />
                  <ellipse cx="941" cy="593" rx="8" ry="10" />
                  <ellipse cx="952" cy="610" rx="8" ry="10" />
                  <path d="M931 607c7 0 10 6 15 11 12 11 9 25-3 25-6 0-18-1-25 0-13 0-16-14-5-25 5-5 9-11 18-11z" />
                  <text x="835" y="643" fontSize="43" fontWeight="700" fontFamily="Liberation Sans">Bai</text>
                  <text x="914" y="638" fontSize="26" fontWeight="700" fontFamily="Liberation Sans">du</text>
                  <text x="960" y="640" fontSize="34" fontWeight="700">经验</text>
                  <text x="837" y="668" fontSize="23">jingyan.baidu.com</text>
                </svg>
              </Watermark>
            </FillForm>
          </FillBody>
        </FillPanel>
      </Body>
    </Shell>
  );
}
